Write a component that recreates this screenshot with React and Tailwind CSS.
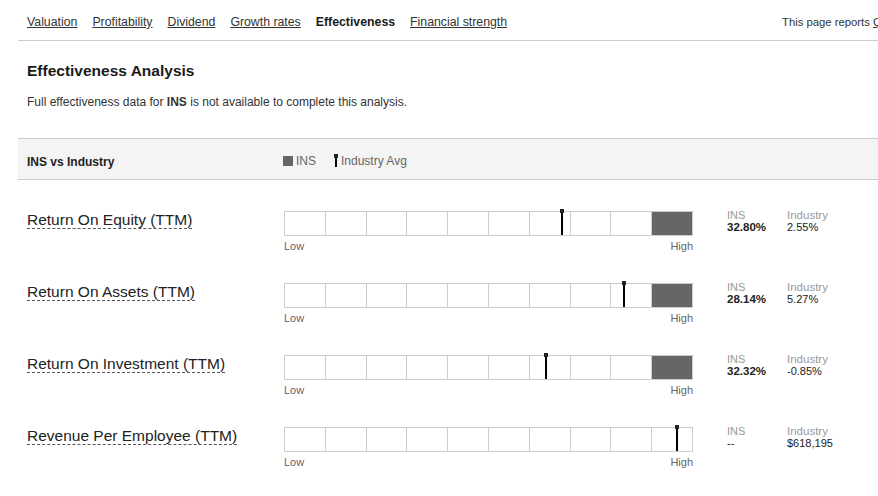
import React from "react";

const navItems = ["Valuation", "Profitability", "Dividend", "Growth rates", "Effectiveness", "Financial strength"];

const rows = [
  { label: "Return On Equity (TTM)", marker: 276, fill: true, ins: "32.80%", ind: "2.55%" },
  { label: "Return On Assets (TTM)", marker: 338, fill: true, ins: "28.14%", ind: "5.27%" },
  { label: "Return On Investment (TTM)", marker: 260, fill: true, ins: "32.32%", ind: "-0.85%" },
  { label: "Revenue Per Employee (TTM)", marker: 391, fill: false, ins: "--", ind: "$618,195" },
];

function Marker({ left }) {
  return (
    <div className="absolute top-[-3px] h-[26px] w-[2px] bg-black" style={{ left }}>
      <div className="absolute left-[-1px] top-0 h-[4px] w-[4px] bg-[#222]" />
    </div>
  );
}

function Row({ r }) {
  return (
    <div className="flex h-[72px] items-start">
      <div className="mt-[-3px] w-[266px] shrink-0 pl-[9px]">
        <span className="inline-block border-b border-dashed border-[#555] text-[15.5px] leading-[17px] text-[#222]">
          {r.label}
        </span>
      </div>
      <div className="w-[409px] shrink-0">
        <div className="relative flex h-[25px] border border-[#ccc]">
          {Array.from({ length: 10 }).map((_, i) => (
            <div
              key={i}
              className={
                i === 9
                  ? r.fill
                    ? "flex-1 bg-[#666]"
                    : "flex-1"
                  : "flex-1 border-r border-[#ccc]"
              }
            />
          ))}
          <Marker left={r.marker} />
        </div>
        <div className="mt-[4px] flex justify-between text-[11px] leading-[13px] text-[#666]">
          <span>Low</span>
          <span>High</span>
        </div>
      </div>
      <div className="ml-[34px] mt-[-2px] flex text-[11px] leading-[12px]">
        <div className="w-[60px]">
          <div className="text-[#999]">INS</div>
          <div className={r.ins === "--" ? "text-[#222]" : "text-[11.5px] font-bold text-[#222]"}>{r.ins}</div>
        </div>
        <div>
          <div className="text-[11.5px] text-[#999]">Industry</div>
          <div className="text-[#222]">{r.ind}</div>
        </div>
      </div>
    </div>
  );
}

export default function App() {
  return (
    <div
      className="w-[878px] overflow-hidden bg-white pl-[18px] text-[#222]"
      style={{ fontFamily: '"Liberation Sans", Arial, sans-serif' }}
    >
      <div className="flex h-[41px] border-b border-[#ccc] pl-[9px] pt-[15px] text-[12.3px] leading-[14px]">
        <div className="flex gap-[15px]">
          {navItems.map((n) =>
            n === "Effectiveness" ? (
              <span key={n} className="font-bold text-[#1a1a1a]">
                {n}
              </span>
            ) : (
              <span key={n} className="text-[#333] underline">
                {n}
              </span>
            )
          )}
        </div>
        <div className="ml-auto w-[96px] shrink-0 overflow-hidden whitespace-nowrap text-[11.3px] text-[#333]">
          This page reports <span className="underline">Quarterly data</span>
        </div>
      </div>

      <div className="pl-[9px]">
        <h2 className="mt-[21px] text-[15.5px] font-bold leading-[18px] text-[#1a1a1a]">Effectiveness Analysis</h2>
        <p className="mt-[15px] text-[12px] leading-[14px] text-[#333]">
          Full effectiveness data for <span className="font-bold">INS</span> is not available to complete this analysis.
        </p>
      </div>

      <div className="mt-[29px] flex h-[42px] items-center border-y border-[#ccc] bg-[#f4f4f4] pt-[3px]">
        <div className="w-[265px] shrink-0 pl-[9px] pt-[2px] text-[12px] font-bold text-[#222]">INS vs Industry</div>
        <div className="flex items-center text-[12px] text-[#666]">
          <span className="h-[10px] w-[10px] bg-[#666]" />
          <span className="ml-[3px]">INS</span>
          <span className="relative ml-[18px] h-[13px] w-[4px]">
            <span className="absolute left-[1px] top-0 h-[13px] w-[2px] bg-black" />
            <span className="absolute left-0 top-0 h-[4px] w-[4px] bg-[#222]" />
          </span>
          <span className="ml-[3px]">Industry Avg</span>
        </div>
      </div>

      <div className="pt-[31px]">
        {rows.map((r) => (
          <Row key={r.label} r={r} />
        ))}
      </div>
    </div>
  );
}
